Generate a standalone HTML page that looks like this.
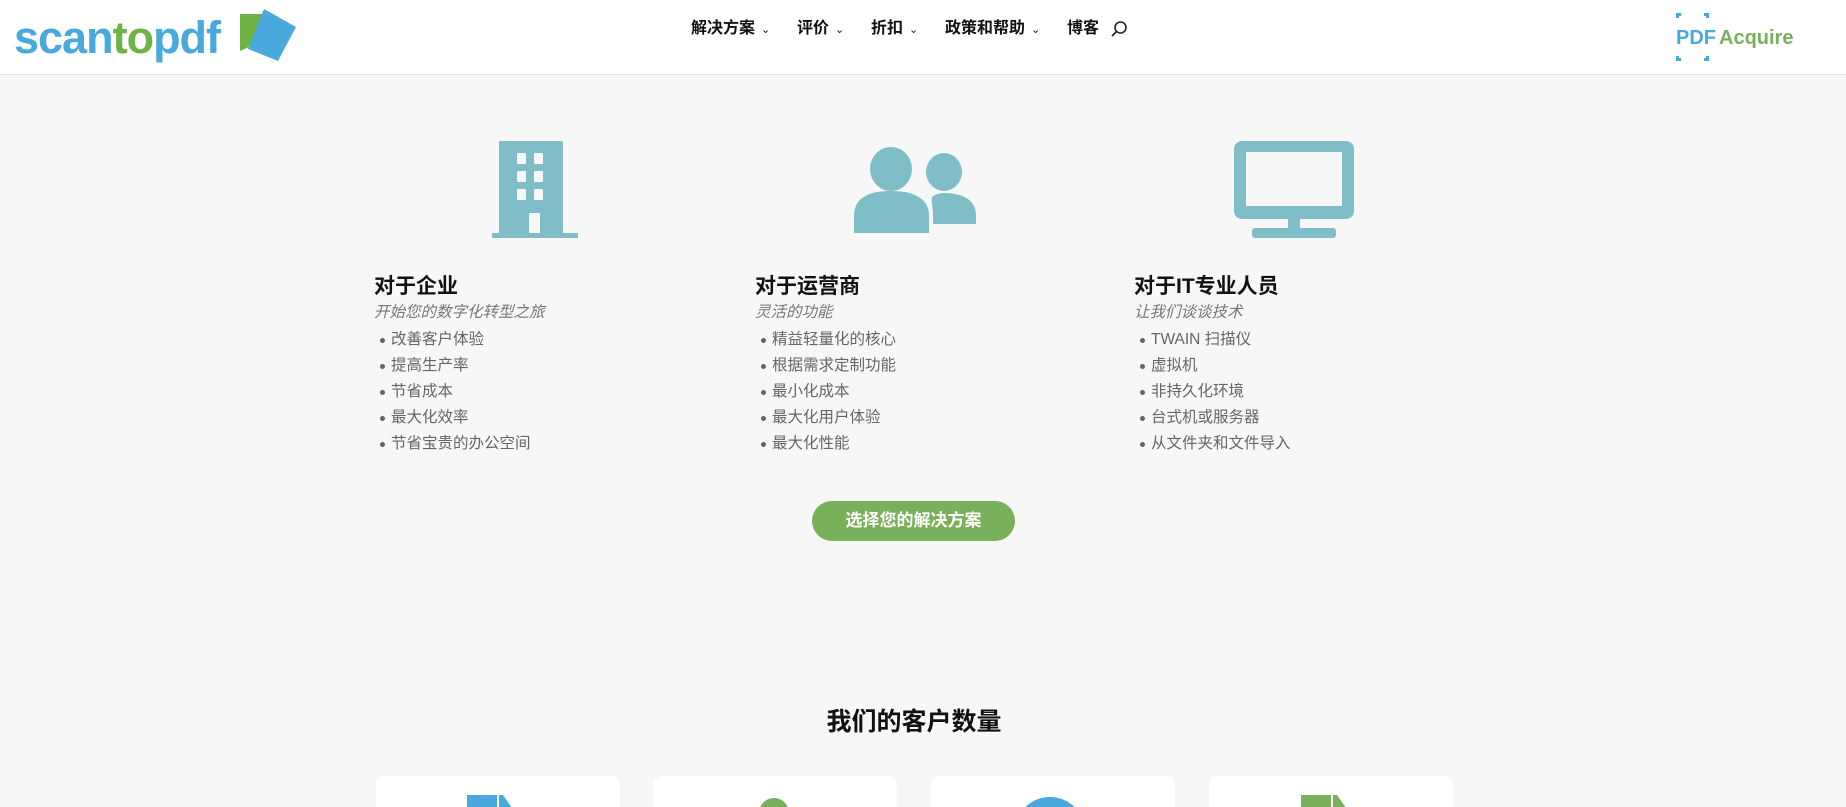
<!DOCTYPE html>
<html style="width:1846px;height:807px;overflow:hidden"><head><meta charset="utf-8"><style>
*{margin:0;padding:0;box-sizing:border-box}
body{width:1846px;height:807px;overflow:hidden;background:#f7f7f7;font-family:"Liberation Sans","Noto Sans CJK SC",sans-serif;position:relative}
.hdr{position:absolute;left:0;top:0;width:1846px;height:75px;background:#fff;border-bottom:1px solid #e4e4e4}
.abs{position:absolute}
.nav{position:absolute;top:18px;font-size:16px;font-weight:bold;color:#111;line-height:22px;white-space:nowrap}
.nav small{font-size:11px;margin-left:6px;font-weight:normal}
.col{position:absolute;top:273px;width:360px}
.col h3{font-size:21px;font-weight:bold;color:#111;line-height:28px}
.col .sub{font-size:15.5px;font-style:italic;color:#777;line-height:24px;margin-top:0}
.col ul{list-style:none;margin-top:2px}
.col li{font-size:15.5px;color:#666;line-height:26px;padding-left:17px;position:relative}
.col li:before{content:"";position:absolute;left:6px;top:11px;width:5px;height:5px;border-radius:50%;background:#666}
.card{position:absolute;top:776px;width:244px;height:31px;background:#fff;border-radius:9px 9px 0 0;overflow:hidden}
</style></head><body>
<div class="hdr">
 <div class="abs" style="left:14px;top:8px;font-size:45px;font-weight:bold;letter-spacing:-1px;line-height:60px;color:#4aa9dc">scan<span style="color:#6fb347">to</span>pdf</div>
 <svg class="abs" style="left:238px;top:9px" width="60" height="54" viewBox="0 0 60 54"><polygon points="2,5 25,5 11,38 2,42" fill="#6fb347"/><polygon points="26,0 58,18 40,52 10,40" fill="#4aa9dc"/></svg>
 <div class="nav" style="left:691px">解决方案<small>⌄</small></div>
 <div class="nav" style="left:797px">评价<small>⌄</small></div>
 <div class="nav" style="left:871px">折扣<small>⌄</small></div>
 <div class="nav" style="left:945px">政策和帮助<small>⌄</small></div>
 <div class="nav" style="left:1067px">博客</div>
 <svg class="abs" style="left:1110px;top:20px" width="18" height="18" viewBox="0 0 18 18"><circle cx="10.5" cy="7.5" r="5.5" fill="none" stroke="#222" stroke-width="1.6"/><line x1="6.5" y1="11.5" x2="2" y2="16" stroke="#222" stroke-width="1.8"/></svg>
 <svg class="abs" style="left:1675px;top:10px" width="140" height="54" viewBox="0 0 140 54"><g fill="#4aa9dc"><rect x="1" y="3" width="5" height="3"/><rect x="1" y="3" width="3" height="5"/><rect x="29" y="3" width="5" height="3"/><rect x="31" y="3" width="3" height="5"/><rect x="1" y="48" width="5" height="3"/><rect x="1" y="46" width="3" height="5"/><rect x="29" y="48" width="5" height="3"/><rect x="31" y="46" width="3" height="5"/></g><text x="1" y="34" font-family="Liberation Sans" font-weight="bold" font-size="20" fill="#4aa9dc">PDF</text><text x="44" y="34" font-family="Liberation Sans" font-weight="bold" font-size="20" fill="#7ab05b">Acquire</text></svg>
</div>

<svg class="abs" style="left:492px;top:141px" width="86" height="97" viewBox="0 0 86 97"><path d="M7 0h62a2 2 0 0 1 2 2v90h15v5H0v-5h7z" fill="#7fbec6"/><g fill="#f7f7f7"><rect x="25" y="12" width="9" height="11" rx="1"/><rect x="42" y="12" width="9" height="11" rx="1"/><rect x="25" y="30" width="9" height="11" rx="1"/><rect x="42" y="30" width="9" height="11" rx="1"/><rect x="25" y="48" width="9" height="11" rx="1"/><rect x="42" y="48" width="9" height="11" rx="1"/><rect x="37" y="72" width="11" height="20"/></g></svg>
<svg class="abs" style="left:854px;top:147px" width="122" height="86" viewBox="0 0 122 86"><ellipse cx="37" cy="22" rx="21" ry="22" fill="#7fbec6"/><path d="M0 86v-17c0-15 10-25 37-25s38 10 38 25v17z" fill="#7fbec6"/><ellipse cx="90" cy="25" rx="18" ry="19" fill="#7fbec6"/><path d="M78 50c4-3 8-4 12-4 20 0 32 8 32 22v9H79v-9c0-8-2-13-1-18z" fill="#7fbec6"/></svg>
<svg class="abs" style="left:1234px;top:141px" width="120" height="97" viewBox="0 0 120 97"><rect x="0" y="0" width="120" height="78" rx="8" fill="#7fbec6"/><rect x="12" y="11" width="96" height="54" fill="#f7f7f7"/><rect x="54" y="76" width="12" height="12" fill="#7fbec6"/><rect x="18" y="87" width="84" height="10" rx="3" fill="#7fbec6"/></svg>

<div class="col" style="left:374px"><h3>对于企业</h3><div class="sub">开始您的数字化转型之旅</div><ul><li>改善客户体验</li><li>提高生产率</li><li>节省成本</li><li>最大化效率</li><li>节省宝贵的办公空间</li></ul></div>
<div class="col" style="left:755px"><h3>对于运营商</h3><div class="sub">灵活的功能</div><ul><li>精益轻量化的核心</li><li>根据需求定制功能</li><li>最小化成本</li><li>最大化用户体验</li><li>最大化性能</li></ul></div>
<div class="col" style="left:1134px"><h3>对于IT专业人员</h3><div class="sub">让我们谈谈技术</div><ul><li>TWAIN 扫描仪</li><li>虚拟机</li><li>非持久化环境</li><li>台式机或服务器</li><li>从文件夹和文件导入</li></ul></div>

<div class="abs" style="left:812px;top:501px;width:203px;height:40px;border-radius:20px;background:#78b15a;color:#fff;font-weight:bold;font-size:17px;line-height:40px;text-align:center">选择您的解决方案</div>

<div class="abs" style="left:0;width:1828px;top:705px;text-align:center;font-size:25px;font-weight:bold;color:#111;line-height:34px">我们的客户数量</div>

<div class="card" style="left:376px"><svg class="abs" style="left:91px;top:19px" width="55" height="20"><rect x="0" y="0" width="30" height="20" fill="#4aa9dc"/><polygon points="32,0 36,0 50,20 32,20" fill="#4aa9dc"/></svg></div>
<div class="card" style="left:653px"><div class="abs" style="left:106px;top:22px;width:30px;height:30px;border-radius:50%;background:#7ab05b"></div></div>
<div class="card" style="left:931px"><div class="abs" style="left:84px;top:21px;width:70px;height:70px;border-radius:50%;background:#4aa9dc"></div></div>
<div class="card" style="left:1209px"><svg class="abs" style="left:92px;top:19px" width="55" height="20"><rect x="0" y="0" width="30" height="20" fill="#7ab05b"/><polygon points="32,0 36,0 50,20 32,20" fill="#7ab05b"/></svg></div>
</body></html>
